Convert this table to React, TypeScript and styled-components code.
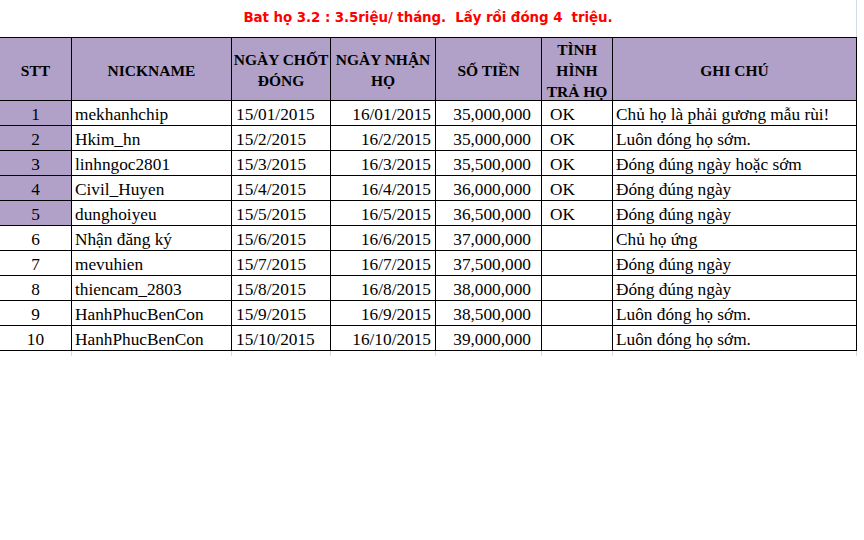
import React from "react";
import styled, { createGlobalStyle } from "styled-components";

const GlobalStyle = createGlobalStyle`
  html, body { margin: 0; padding: 0; background: #ffffff; }
  body { font-family: "Liberation Serif", "Times New Roman", serif; color: #000; }
`;

const PURPLE = "#b1a0c7";
const GRID = "#d4dbe9";

type Align = "left" | "right" | "center";

interface ColDef {
  width: number;
  align: Align;
  pl: number;
  pr: number;
}

const COLS: ColDef[] = [
  { width: 72, align: "center", pl: 0, pr: 0 },
  { width: 160, align: "left", pl: 3, pr: 0 },
  { width: 99, align: "left", pl: 4, pr: 0 },
  { width: 105, align: "right", pl: 0, pr: 4 },
  { width: 106, align: "right", pl: 0, pr: 10 },
  { width: 71, align: "left", pl: 8, pr: 0 },
  { width: 244, align: "left", pl: 3, pr: 0 },
];

const Sheet = styled.div`
  width: 858px;
`;

const TitleRow = styled.div`
  height: 37px;
  width: 857px;
  box-sizing: border-box;
  border-right: 1px solid ${GRID};
  display: flex;
  justify-content: center;
  align-items: flex-start;
  padding-top: 9px;
`;

const Title = styled.h1`
  margin: 0;
  font-family: "DejaVu Sans", Verdana, sans-serif;
  font-weight: bold;
  font-size: 13.4px;
  line-height: 17px;
  color: #ff0000;
  white-space: pre;
  letter-spacing: -0.06px;
`;

const Table = styled.div`
  display: grid;
  grid-template-columns: ${COLS.map((c) => `${c.width}px`).join(" ")};
  width: 857px;
`;

const HeadCell = styled.div`
  height: 64px;
  box-sizing: border-box;
  background: ${PURPLE};
  border-top: 1px solid #000;
  border-bottom: 1px solid #000;
  border-right: 1px solid #000;
  display: flex;
  align-items: center;
  justify-content: center;
  text-align: center;
  font-weight: bold;
  font-size: 15.5px;
  line-height: 21px;
  padding-top: 2px;
  white-space: nowrap;
  overflow: hidden;
`;

const Cell = styled.div<{ $align: Align; $pl: number; $pr: number; $shade?: boolean }>`
  height: 25px;
  box-sizing: border-box;
  border-right: 1px solid #000;
  border-bottom: 1px solid #000;
  background: ${(p) => (p.$shade ? PURPLE : "#ffffff")};
  display: flex;
  align-items: flex-end;
  justify-content: ${(p) =>
    p.$align === "left" ? "flex-start" : p.$align === "right" ? "flex-end" : "center"};
  padding-left: ${(p) => p.$pl}px;
  padding-right: ${(p) => p.$pr}px;
  font-size: 17.3px;
  line-height: 20px;
  white-space: nowrap;
  overflow: hidden;
`;

const TailCell = styled.div`
  height: 5px;
  box-sizing: border-box;
  border-right: 1px solid ${GRID};
`;

const headers: React.ReactNode[] = [
  "STT",
  "NICKNAME",
  <>NGÀY CHỐT<br />ĐÓNG</>,
  <>NGÀY NHẬN<br />HỌ</>,
  "SỐ TIỀN",
  <>TÌNH<br />HÌNH<br />TRẢ HỌ</>,
  "GHI CHÚ",
];

const rows: string[][] = [
  ["1", "mekhanhchip", "15/01/2015", "16/01/2015", "35,000,000", "OK", "Chủ họ là phải gương mẫu rùi!"],
  ["2", "Hkim_hn", "15/2/2015", "16/2/2015", "35,000,000", "OK", "Luôn đóng họ sớm."],
  ["3", "linhngoc2801", "15/3/2015", "16/3/2015", "35,500,000", "OK", "Đóng đúng ngày hoặc sớm"],
  ["4", "Civil_Huyen", "15/4/2015", "16/4/2015", "36,000,000", "OK", "Đóng đúng ngày"],
  ["5", "dunghoiyeu", "15/5/2015", "16/5/2015", "36,500,000", "OK", "Đóng đúng ngày"],
  ["6", "Nhận đăng ký", "15/6/2015", "16/6/2015", "37,000,000", "", "Chủ họ ứng"],
  ["7", "mevuhien", "15/7/2015", "16/7/2015", "37,500,000", "", "Đóng đúng ngày"],
  ["8", "thiencam_2803", "15/8/2015", "16/8/2015", "38,000,000", "", "Đóng đúng ngày"],
  ["9", "HanhPhucBenCon", "15/9/2015", "16/9/2015", "38,500,000", "", "Luôn đóng họ sớm."],
  ["10", "HanhPhucBenCon", "15/10/2015", "16/10/2015", "39,000,000", "", "Luôn đóng họ sớm."],
];

export default function App() {
  return (
    <>
      <GlobalStyle />
      <Sheet>
        <TitleRow>
          <Title>{"Bat họ 3.2 : 3.5riệu/ tháng.  Lấy rồi đóng 4  triệu."}</Title>
        </TitleRow>
        <Table>
          {headers.map((h, i) => (
            <HeadCell key={`h${i}`}>
              <span>{h}</span>
            </HeadCell>
          ))}
          {rows.map((r, ri) =>
            r.map((v, ci) => (
              <Cell
                key={`${ri}-${ci}`}
                $align={COLS[ci].align}
                $pl={COLS[ci].pl}
                $pr={COLS[ci].pr}
                $shade={ci === 0 && r[5] === "OK"}
              >
                {v}
              </Cell>
            ))
          )}
          {COLS.map((_, i) => (
            <TailCell key={`t${i}`} />
          ))}
        </Table>
      </Sheet>
    </>
  );
}
